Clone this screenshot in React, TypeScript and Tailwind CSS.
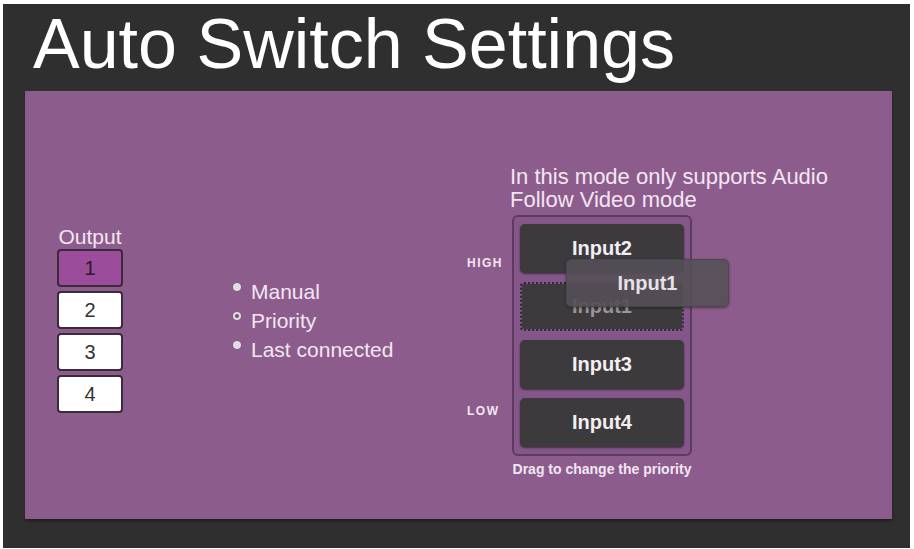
import React from "react";

const outputs = ["1", "2", "3", "4"];
const modes = [
  { label: "Manual", selected: false },
  { label: "Priority", selected: true },
  { label: "Last connected", selected: false },
];

function Bullet({ selected }: { selected: boolean }) {
  return (
    <span className="mt-[5px] mr-[10px] flex h-[8px] w-[8px] shrink-0 items-center justify-center rounded-full bg-[#e4dce4] shadow-[0_0_1px_rgba(0,0,0,0.4)]">
      {selected && <span className="h-[4px] w-[4px] rounded-full bg-[#6d566d]" />}
    </span>
  );
}

function InputTile({ name }: { name: string }) {
  return (
    <div className="flex h-[49px] w-full items-center justify-center rounded-[5px] bg-[#3c3a3d] pb-[2px] shadow-[0_1px_2px_rgba(0,0,0,0.5)] text-[20px] font-bold text-[#f2eef2]">
      {name}
    </div>
  );
}

export default function App() {
  return (
    <div
      className="h-[549px] w-[914px] overflow-hidden bg-white pl-[3px] pt-[4px]"
      style={{ fontFamily: '"Liberation Sans", Arial, sans-serif' }}
    >
      <div className="flex h-[544px] w-[907px] flex-col bg-[#2f2f2f] pt-[5px]">
        <h1 className="pl-[30px] text-[70px] leading-[70px] text-white">Auto Switch Settings</h1>

        <div className="ml-[22px] mt-[12px] flex h-[428px] w-[867px] items-start bg-[#8c5d8c] shadow-[0_2px_2px_rgba(0,0,0,0.35)]">
          {/* Output selector */}
          <div className="ml-[32px] mt-[136px] flex w-[66px] flex-col items-center">
            <div className="text-[21px] leading-[20px] text-[#f3e6f3]">Output</div>
            <div className="mt-[2px] flex w-full flex-col gap-[4px]">
              {outputs.map((o, i) => (
                <div
                  key={o}
                  className={
                    i === 0
                      ? "flex h-[38px] w-full items-center justify-center rounded-[4px] border-2 border-[#3a2a3a] bg-[#9b4c9b] text-[20px] text-[#2a1a2a]"
                      : "flex h-[38px] w-full items-center justify-center rounded-[4px] border-2 border-[#3a2a3a] bg-white text-[20px] text-[#333]"
                  }
                >
                  {o}
                </div>
              ))}
            </div>
          </div>

          {/* Switching mode */}
          <div className="ml-[110px] mt-[187px] flex w-[200px] flex-col">
            {modes.map((m) => (
              <div key={m.label} className="flex items-start text-[21px] leading-[30px] text-[#f3e6f3]">
                <Bullet selected={m.selected} />
                <span className="-mt-[1px]">{m.label}</span>
              </div>
            ))}
          </div>

          {/* Priority list */}
          <div className="ml-[34px] mt-[74px] flex flex-col">
            <div className="pl-[43px] text-[22px] leading-[23px] text-[#f3e6f3]">
              <div>In this mode only supports Audio</div>
              <div>Follow Video mode</div>
            </div>
            <div className="mt-[4px] flex">
              <div className="flex w-[45px] flex-col justify-between pb-[60px] pt-[42px] text-[12px] font-bold tracking-[1.5px] text-[#f3e6f3]">
                <span className="leading-[12px]">HIGH</span>
                <span className="leading-[12px]">LOW</span>
              </div>
              <div className="flex flex-col items-center">
                <div className="relative flex w-[180px] flex-col gap-[9px] rounded-[6px] border-2 border-[#5e3a5e] bg-[#85568a] px-[6px] pb-[7px] pt-[7px]">
                  <InputTile name="Input2" />
                  <div className="flex h-[49px] w-full items-center justify-center rounded-[4px] border-2 border-dotted border-[#2b2a2c] bg-[#3c3a3d] bg-clip-padding pb-[2px] text-[20px] font-bold text-[#9a959a]">
                    Input1
                  </div>
                  <InputTile name="Input3" />
                  <InputTile name="Input4" />

                  {/* tile being dragged */}
                  <div className="absolute left-[52px] top-[42px] flex h-[48px] w-[163px] items-center justify-center rounded-[5px] border border-[#4a464b] bg-[rgba(84,80,86,0.9)] text-[20px] font-bold text-[#e6e2e6] shadow-[0_1px_3px_rgba(0,0,0,0.4)]">
                    Input1
                  </div>
                </div>
                <div className="mt-[5px] text-[14px] font-bold leading-[16px] text-[#f3e6f3]">
                  Drag to change the priority
                </div>
              </div>
            </div>
          </div>
        </div>
      </div>
    </div>
  );
}
